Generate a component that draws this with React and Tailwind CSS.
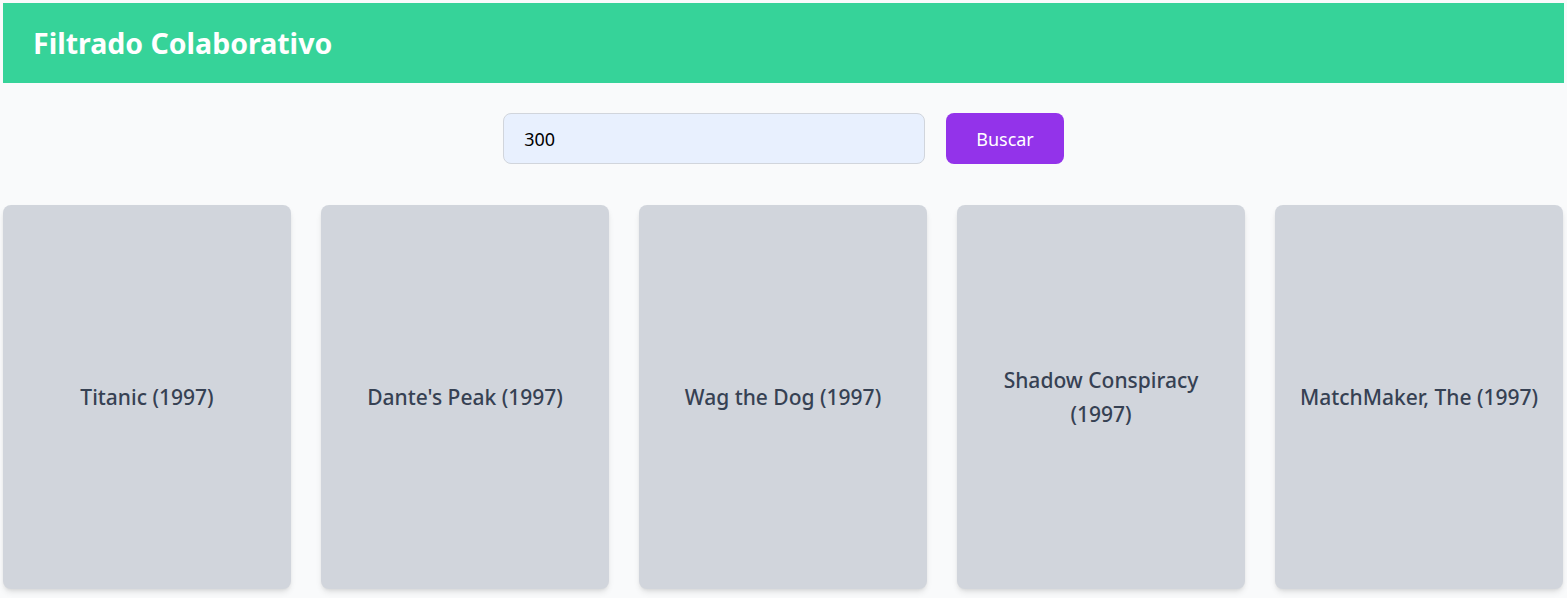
export default function App() {
  const movies = [
    "Titanic (1997)",
    "Dante's Peak (1997)",
    "Wag the Dog (1997)",
    "Shadow Conspiracy (1997)",
    "MatchMaker, The (1997)",
  ];
  return (
    <div
      className="min-h-[598px] bg-gray-50 px-[3px] pt-[3px]"
      style={{ fontFamily: '"Noto Sans", "Open Sans", sans-serif' }}
    >
      <header className="flex h-[80px] items-center bg-[#36d399] px-[30px]">
        <h1 className="text-[28.5px] font-bold text-white">Filtrado Colaborativo</h1>
      </header>
      <div className="flex justify-center gap-[21px] pt-[30px]">
        <input
          defaultValue="300"
          className="h-[51px] w-[422px] rounded-lg border border-gray-300 bg-[#e8f0fe] px-5 text-lg text-black outline-none"
        />
        <button className="h-[51px] rounded-lg bg-[#9333ea] px-[30px] text-lg text-white">
          Buscar
        </button>
      </div>
      <div className="mt-[41px] flex gap-[30px]">
        {movies.map((m) => (
          <div
            key={m}
            className="flex h-[384px] w-[288px] items-center justify-center rounded-lg bg-gray-300 px-4 text-center shadow-md"
          >
            <span className="text-[21px] font-medium leading-[34px] text-gray-700">{m}</span>
          </div>
        ))}
      </div>
    </div>
  );
}
